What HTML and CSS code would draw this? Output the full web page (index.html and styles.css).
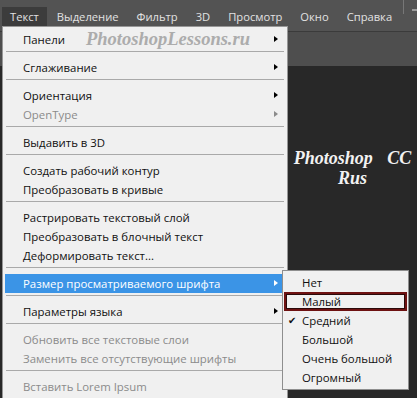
FILE: index.html
```html
<!DOCTYPE html>
<html lang="ru">
<head>
	<meta charset="UTF-8">
	<meta name="viewport" content="width=device-width, initial-scale=1.0">
	<title>Текст — меню</title>
	<link rel="stylesheet" href="styles.css">
</head>
<body>
	<div class="app">
		<div class="menubar">
			<span class="menubar-item active">Текст</span>
			<span class="menubar-item">Выделение</span>
			<span class="menubar-item">Фильтр</span>
			<span class="menubar-item">3D</span>
			<span class="menubar-item">Просмотр</span>
			<span class="menubar-item">Окно</span>
			<span class="menubar-item">Справка</span>
			<span class="win-ctl"><span class="win-dash"></span></span>
		</div>
		<div class="options-bar"></div>
		<div class="canvas">
			<div class="canvas-title">
				<span>Photoshop <span class="cc">CC</span></span>
				<span>Rus</span>
			</div>
		</div>

		<!-- dropdown of the "Текст" menu -->
		<div class="menu">
			<div class="item has-sub"><span class="label">Панели</span><span class="watermark">PhotoshopLessons.ru</span></div>
			<div class="sep"></div>
			<div class="item has-sub"><span class="label">Сглаживание</span></div>
			<div class="sep"></div>
			<div class="item has-sub"><span class="label">Ориентация</span></div>
			<div class="item has-sub disabled"><span class="label">OpenType</span></div>
			<div class="sep"></div>
			<div class="item"><span class="label">Выдавить в 3D</span></div>
			<div class="sep"></div>
			<div class="item"><span class="label">Создать рабочий контур</span></div>
			<div class="item"><span class="label">Преобразовать в кривые</span></div>
			<div class="sep"></div>
			<div class="item"><span class="label">Растрировать текстовый слой</span></div>
			<div class="item"><span class="label">Преобразовать в блочный текст</span></div>
			<div class="item"><span class="label">Деформировать текст...</span></div>
			<div class="sep"></div>
			<div class="item has-sub selected"><span class="label">Размер просматриваемого шрифта</span></div>
			<div class="sep"></div>
			<div class="item has-sub"><span class="label">Параметры языка</span></div>
			<div class="sep"></div>
			<div class="item disabled"><span class="label">Обновить все текстовые слои</span></div>
			<div class="item disabled"><span class="label">Заменить все отсутствующие шрифты</span></div>
			<div class="sep"></div>
			<div class="item disabled"><span class="label">Вставить Lorem Ipsum</span></div>
		</div>

		<!-- submenu: font preview size -->
		<div class="submenu">
			<div class="sub-item">Нет</div>
			<div class="sub-item marked">Малый</div>
			<div class="sub-item checked">Средний</div>
			<div class="sub-item">Большой</div>
			<div class="sub-item">Очень большой</div>
			<div class="sub-item">Огромный</div>
		</div>
	</div>
</body>
</html>
```

FILE: styles.css
```css
/* General styles */
body {
	margin: 0;
	padding: 0;
	background: #282828;
	font-family: 'Open Sans', 'Noto Sans', Arial, sans-serif;
}
.app {
	position: relative;
	width: 417px;
	height: 398px;
	overflow: hidden;
	display: flex;
	flex-direction: column;
	background: #282828;
}

/* Top menu bar */
.menubar {
	height: 32px;
	flex-shrink: 0;
	display: flex;
	align-items: flex-start;
	padding: 7px 0 0 2px;
	box-sizing: border-box;
	background: #535353;
	border-bottom: 1px solid #3b3b3b;
}
.menubar-item {
	height: 19px;
	line-height: 19px;
	padding: 0 8px;
	margin-right: 2px;
	font-size: 11.2px;
	color: #e2e2e2;
}
.menubar-item.active {
	background: #3c3c3c;
}
.win-ctl {
	margin: -7px 0 0 auto;
	width: 13px;
	height: 14px;
	border-left: 1px solid #777;
	position: relative;
}
.win-dash {
	position: absolute;
	left: 8px;
	top: 9px;
	width: 5px;
	height: 2px;
	background: #9a9a9a;
}

.options-bar {
	height: 34px;
	flex-shrink: 0;
	background: #4e4e4e;
}
.canvas {
	flex-grow: 1;
	padding: 82px 0 0 288px;
}
.canvas-title {
	display: flex;
	flex-direction: column;
	align-items: center;
	font-family: 'Liberation Serif', serif;
	font-style: italic;
	font-weight: bold;
	font-size: 18px;
	line-height: 20px;
	color: #f2f2f2;
}
.cc {
	margin-left: 10px;
}

/* Dropdown menu */
.menu {
	position: absolute;
	left: 2px;
	top: 26px;
	width: 286px;
	box-sizing: border-box;
	padding: 3px 0;
	background: #f0f0f0;
	border: 1px solid #979797;
	font-size: 11.4px;
}
.item {
	position: relative;
	display: flex;
	align-items: center;
	height: 19px;
	margin: 0 2px;
	padding-left: 18px;
	color: #111;
	white-space: nowrap;
}
.item.disabled {
	color: #8b8b8b;
}
.item.selected {
	background: #3b94e6;
	color: #fff;
}
.has-sub::after {
	content: "";
	position: absolute;
	right: 7px;
	top: 6px;
	border-left: 4px solid #000;
	border-top: 3.5px solid transparent;
	border-bottom: 3.5px solid transparent;
}
.has-sub.disabled::after {
	border-left-color: #8b8b8b;
}
.has-sub.selected::after {
	border-left-color: #fff;
}
.watermark {
	margin-left: 21px;
	font-family: 'Liberation Serif', serif;
	font-style: italic;
	font-weight: bold;
	font-size: 18.5px;
	color: #acacac;
}
.sep {
	height: 1px;
	margin: 2px 3px 6px;
	background: #a9a9a9;
}

/* Submenu */
.submenu {
	position: absolute;
	left: 282px;
	top: 270px;
	width: 127px;
	box-sizing: border-box;
	padding: 2px 0;
	background: #f0f0f0;
	border: 1px solid #8e8e8e;
	font-size: 11.4px;
}
.sub-item {
	position: relative;
	height: 19px;
	line-height: 19px;
	padding-left: 19px;
	color: #111;
}
.sub-item.marked {
	margin: 0 1px;
	padding-left: 16px;
	box-sizing: border-box;
	border: 2px solid #6e1212;
	box-shadow: inset 0 0 0 1px #2a0a0a;
	line-height: 15px;
}
.sub-item.checked::before {
	content: "\2714";
	position: absolute;
	left: 5px;
	font-size: 10px;
}
```
